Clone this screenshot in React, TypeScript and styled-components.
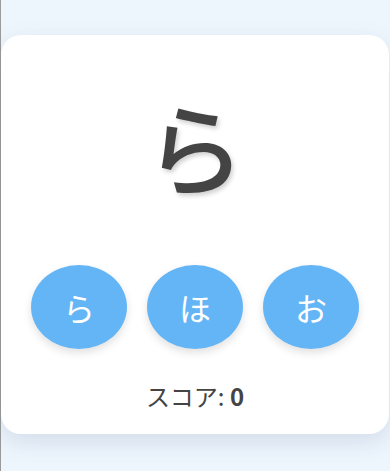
import React from "react";
import styled, { createGlobalStyle } from "styled-components";

const GlobalStyle = createGlobalStyle`
  html, body {
    margin: 0;
    padding: 0;
    background: #eef6fd;
    font-family: "Noto Sans CJK JP", "Noto Sans", sans-serif;
  }
`;

const Page = styled.div`
  box-sizing: border-box;
  min-height: 471px;
  border-left: 1px solid #9a9a9a;
  padding: 35px 1px 0 0;
  display: flex;
  justify-content: center;
  align-items: flex-start;
`;

const Card = styled.div`
  box-sizing: border-box;
  width: 388px;
  height: 399px;
  background: #ffffff;
  border-radius: 20px;
  box-shadow: 0 8px 24px rgba(40, 70, 110, 0.14);
  display: flex;
  flex-direction: column;
  align-items: center;
  padding-top: 60px;
`;

const Kana = styled.div`
  font-size: 100px;
  line-height: 100px;
  font-weight: 500;
  color: #444444;
  text-shadow: 2px 3px 4px rgba(0, 0, 0, 0.18);
  height: 100px;
`;

const Choices = styled.div`
  display: flex;
  gap: 20px;
  margin-top: 70px;
`;

const Choice = styled.button`
  width: 96px;
  height: 84px;
  border: none;
  border-radius: 50%;
  background: #64b5f6;
  color: #ffffff;
  font-family: "Noto Sans CJK JP", sans-serif;
  font-size: 32px;
  font-weight: 400;
  box-shadow: 0 4px 8px rgba(0, 0, 0, 0.12);
  display: flex;
  align-items: center;
  justify-content: center;
  padding: 0;
  cursor: pointer;
`;

const Score = styled.div`
  margin-top: 29px;
  font-size: 24px;
  color: #444444;

  b {
    font-weight: 700;
  }
`;

const options = ["ら", "ほ", "お"];

export default function App() {
  return (
    <>
      <GlobalStyle />
      <Page>
        <Card>
          <Kana>ら</Kana>
          <Choices>
            {options.map((o) => (
              <Choice key={o}>{o}</Choice>
            ))}
          </Choices>
          <Score>
            スコア: <b>0</b>
          </Score>
        </Card>
      </Page>
    </>
  );
}
